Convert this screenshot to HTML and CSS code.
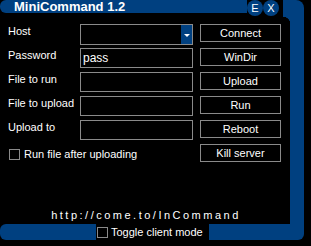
FILE: index.html
```html
<!DOCTYPE html>
<html>
<head>
<meta charset="utf-8">
<link rel="stylesheet" href="styles.css">
</head>
<body>
<div class="app">
  <div class="top">
    <div class="titlebar">
      <div class="bar"><span class="title">MiniCommand 1.2</span></div>
      <span class="circ">E</span>
      <span class="circ">X</span>
    </div>
    <div class="corner"></div>
  </div>
  <div class="middle">
    <div class="content">
      <div class="form">
        <div class="label">Host</div>
        <div class="input host"><span class="drop"><span class="tri"></span></span></div>
        <div class="btn">Connect</div>

        <div class="label">Password</div>
        <div class="input">pass</div>
        <div class="btn">WinDir</div>

        <div class="label">File to run</div>
        <div class="input"></div>
        <div class="btn">Upload</div>

        <div class="label">File to upload</div>
        <div class="input"></div>
        <div class="btn">Run</div>

        <div class="label">Upload to</div>
        <div class="input"></div>
        <div class="btn">Reboot</div>

        <div class="check-row"><span class="box"></span><span>Run file after uploading</span></div>
        <div class="btn">Kill server</div>
      </div>
      <div class="url">http://come.to/InCommand</div>
    </div>
    <div class="rbar"></div>
  </div>
  <div class="bottom">
    <div class="lbar"></div>
    <span class="box bbox"></span>
    <span class="toggle">Toggle client mode</span>
    <div class="brbar"></div>
  </div>
</div>
</body>
</html>
```
FILE: styles.css
```css
* { box-sizing: border-box; }
html, body { margin: 0; padding: 0; background: #000; }
body {
  width: 311px;
  height: 246px;
  overflow: hidden;
  color: #fff;
  font-family: "Liberation Sans", Arial, sans-serif;
  font-size: 11px;
}
.app { width: 304px; }
.top { display: flex; height: 17px; }
.titlebar { display: flex; align-items: flex-start; width: 279px; }
.bar {
  flex: 1;
  height: 13px;
  background: #004080;
  border-radius: 6px 0 0 6px;
  padding-left: 14px;
}
.title {
  display: block;
  font-weight: bold;
  font-size: 13px;
  line-height: 13px;
}
.circ {
  width: 16px;
  height: 16px;
  border-radius: 50%;
  background: #004080;
  font-size: 11px;
  line-height: 16px;
  text-align: center;
  flex: none;
}
.corner {
  margin-left: 4px;
  width: 21px;
  height: 17px;
  background: #004080;
  border-top-right-radius: 8px;
}
.middle { display: flex; height: 207px; }
.content {
  width: 290px;
  padding: 7px 0 0 8px;
  display: flex;
  flex-direction: column;
}
.form {
  display: grid;
  grid-template-columns: 72px 113px 88px;
  grid-auto-rows: 20px;
  row-gap: 4px;
}
.label { line-height: 14px; }
.input {
  height: 20px;
  border: 1px solid #8a8a8a;
  padding-left: 2px;
  line-height: 18px;
  font-size: 12px;
  display: flex;
}
.host { height: 21px; padding-left: 0; }
.drop {
  margin-left: auto;
  width: 11px;
  height: 100%;
  background: #004080;
  display: flex;
  align-items: center;
  justify-content: center;
}
.tri {
  width: 0;
  height: 0;
  border-left: 3px solid transparent;
  border-right: 3px solid transparent;
  border-top: 3px solid #fff;
  margin-top: 1px;
}
.btn {
  justify-self: end;
  width: 81px;
  height: 18px;
  border: 1px solid #8a8a8a;
  text-align: center;
  line-height: 16px;
}
.check-row {
  grid-column: 1 / 3;
  display: flex;
  align-items: center;
  gap: 4px;
  padding-left: 1px;
  padding-top: 2px;
  height: 18px;
}
.box {
  display: inline-block;
  width: 11px;
  height: 11px;
  border: 1px solid #8a8a8a;
  flex: none;
}
.url {
  margin-top: 44px;
  font-family: "Liberation Sans", Arial, sans-serif;
  font-size: 11px;
  line-height: 14px;
  letter-spacing: 2.5px;
  text-align: center;
  padding-right: 6px;
}
.rbar {
  position: relative;
  width: 14px;
  background: #004080;
}
.rbar::before {
  content: "";
  position: absolute;
  left: -7px;
  top: 0;
  width: 7px;
  height: 7px;
  background: radial-gradient(circle at 0 100%, transparent 7px, #004080 7.5px);
}
.bottom { display: flex; align-items: center; height: 16px; }
.lbar {
  width: 96px;
  height: 16px;
  background: #004080;
  border-radius: 6px 0 0 6px;
}
.bbox { margin-left: 1px; margin-top: 1px; }
.toggle { margin-left: 3px; line-height: 14px; }
.brbar {
  margin-left: auto;
  width: 95px;
  height: 16px;
  background: #004080;
  border-bottom-right-radius: 6px;
}
```
